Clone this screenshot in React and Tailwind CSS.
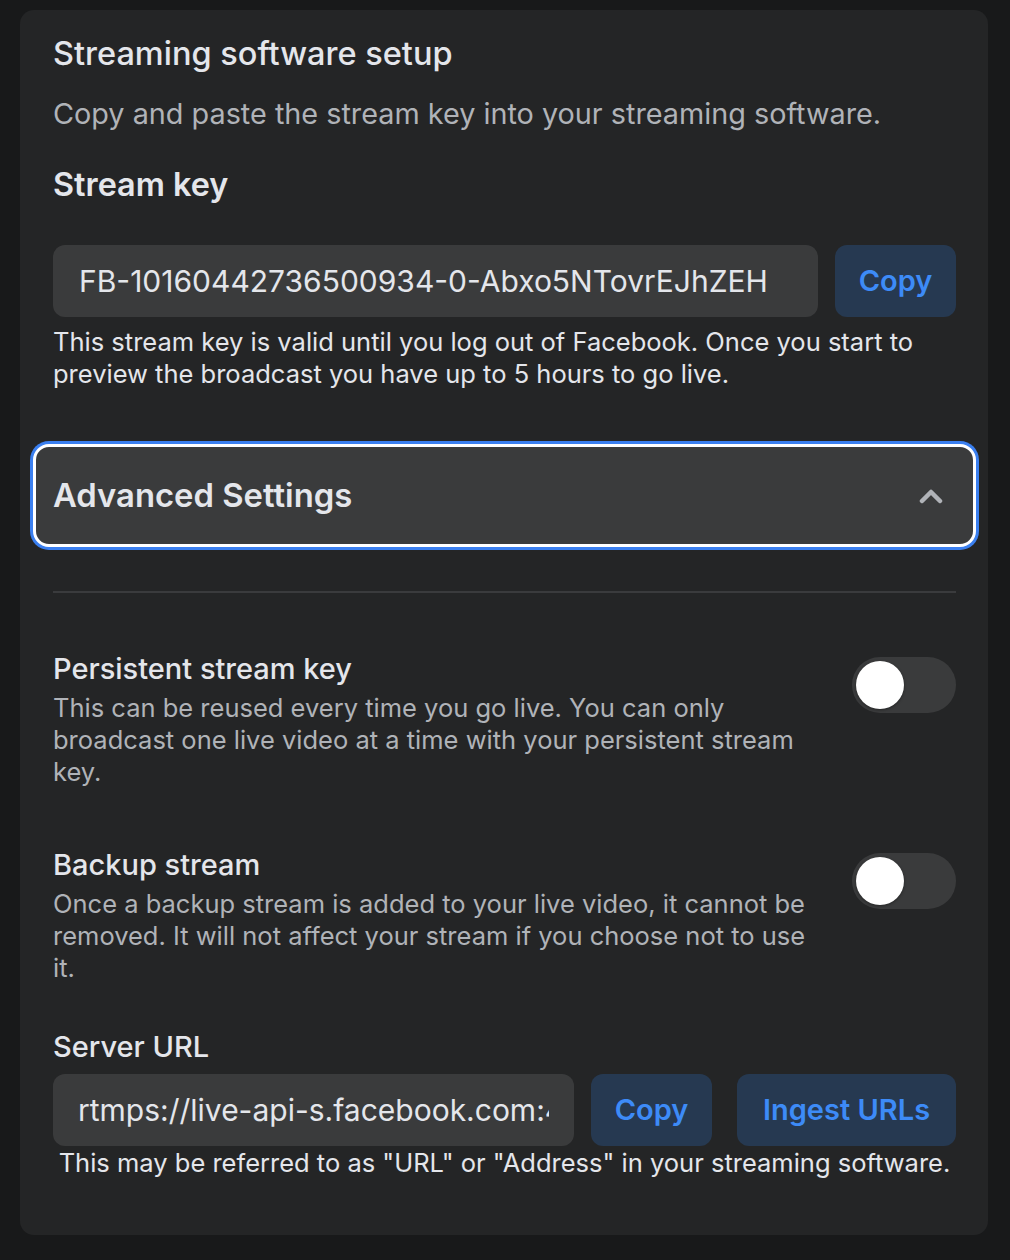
import { useState } from 'react';

function Toggle({ on, onChange }) {
  return (
    <button
      type="button"
      onClick={() => onChange(!on)}
      className={`mt-[5px] flex h-[56px] w-[104px] shrink-0 items-center rounded-full p-[4px] ${on ? 'justify-end bg-[#2d88ff]' : 'justify-start bg-[#3a3b3c]'}`}
    >
      <span className="block h-[48px] w-[48px] rounded-full bg-white shadow-[0_1px_3px_rgba(0,0,0,0.4)]" />
    </button>
  );
}

function SettingRow({ title, text, on, onChange }) {
  return (
    <div className="flex items-start">
      <div className="mr-[28px] flex-1">
        <div className="text-[29px] leading-[34px] font-medium text-[#e4e6eb]">{title}</div>
        <p className="mt-[6px] text-[25.5px] leading-[32px] text-[#b0b3b8]">{text}</p>
      </div>
      <Toggle on={on} onChange={onChange} />
    </div>
  );
}

export default function App() {
  const [open, setOpen] = useState(true);
  const [persistent, setPersistent] = useState(false);
  const [backup, setBackup] = useState(false);

  return (
    <div className="min-h-[1260px] bg-[#18191a] pt-[10px] font-['Inter',sans-serif]">
      <div className="mx-[20px] w-[968px] rounded-[14px] bg-[#242526] px-[33px] pt-[24px] pb-[56px] pr-[32px]">
        <h1 className="text-[32.5px] leading-[40px] font-medium text-[#e4e6eb]">Streaming software setup</h1>
        <p className="mt-[22px] text-[28.8px] leading-[36px] text-[#b0b3b8]">
          Copy and paste the stream key into your streaming software.
        </p>

        <h2 className="mt-[33px] text-[32.4px] leading-[40px] font-semibold text-[#e4e6eb]">Stream key</h2>
        <div className="mt-[40px] flex gap-[17px]">
          <input
            readOnly
            value="FB-10160442736500934-0-Abxo5NTovrEJhZEH"
            className="h-[72px] min-w-0 flex-1 rounded-[12px] bg-[#3a3b3c] px-[26px] text-[30px] text-[#e4e6eb] outline-none"
          />
          <button className="h-[72px] w-[121px] rounded-[12px] bg-[#263951] text-[29px] font-semibold text-[#3d8bf7]">
            Copy
          </button>
        </div>
        <p className="mt-[9px] text-[25.5px] leading-[32px] text-[#e4e6eb]">
          This stream key is valid until you log out of Facebook. Once you start to preview the broadcast you have up
          to 5 hours to go live.
        </p>

        <button
          type="button"
          onClick={() => setOpen(!open)}
          className="mt-[54px] -mx-[20px] flex h-[103px] w-[calc(100%+40px)] items-center justify-between rounded-[16px] border-[3px] border-white bg-[#3a3b3c] pl-[17px] pr-[30px] shadow-[0_0_0_3px_#3a7ff0]"
        >
          <span className="text-[32.8px] font-semibold text-[#e4e6eb]">Advanced Settings</span>
          <svg width="24" height="16" viewBox="0 0 24 16" fill="none" className={open ? '' : 'rotate-180'}>
            <polyline
              points="3,13 12,4 21,13"
              stroke="#b0b3b8"
              strokeWidth="4.5"
              strokeLinecap="round"
              strokeLinejoin="round"
            />
          </svg>
        </button>

        {open && (
          <>
            <div className="mt-[44px] h-[2px] bg-[#3a3b3d]" />

            <div className="mt-[59px]">
              <SettingRow
                title="Persistent stream key"
                text="This can be reused every time you go live. You can only broadcast one live video at a time with your persistent stream key."
                on={persistent}
                onChange={setPersistent}
              />
            </div>
            <div className="mt-[60px]">
              <SettingRow
                title="Backup stream"
                text="Once a backup stream is added to your live video, it cannot be removed. It will not affect your stream if you choose not to use it."
                on={backup}
                onChange={setBackup}
              />
            </div>

            <div className="mt-[46px] text-[29px] leading-[34px] font-medium text-[#e4e6eb]">Server URL</div>
            <div className="mt-[10px] flex">
              <input
                readOnly
                value="rtmps://live-api-s.facebook.com:443/rtmp/"
                className="h-[72px] min-w-0 flex-1 rounded-[12px] bg-[#3a3b3c] px-[25px] text-[30px] text-[#e4e6eb] outline-none"
              />
              <button className="ml-[17px] h-[72px] w-[121px] rounded-[12px] bg-[#263951] text-[29px] font-semibold text-[#3d8bf7]">
                Copy
              </button>
              <button className="ml-[25px] h-[72px] w-[219px] rounded-[12px] bg-[#263951] text-[29px] font-semibold text-[#3d8bf7]">
                Ingest URLs
              </button>
            </div>
            <p className="mt-[1px] text-center text-[25.5px] leading-[32px] text-[#e4e6eb]">
              This may be referred to as "URL" or "Address" in your streaming software.
            </p>
          </>
        )}
      </div>
    </div>
  );
}
